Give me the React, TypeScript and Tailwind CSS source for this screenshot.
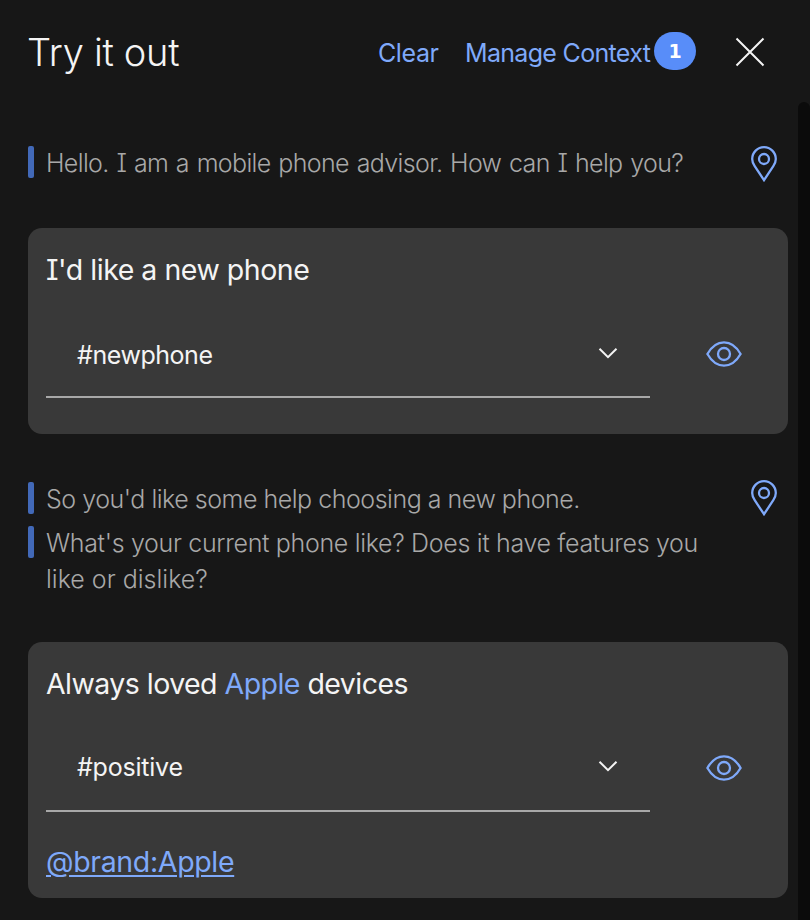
import type { ReactNode } from "react";

function CloseIcon() {
  return (
    <svg width="30" height="30" viewBox="0 0 30 30" fill="none" stroke="#f4f4f4" strokeWidth="2">
      <path d="M1.5 1.5 28.5 28.5M28.5 1.5 1.5 28.5" />
    </svg>
  );
}

function PinIcon() {
  return (
    <svg width="26" height="36" viewBox="0 0 26 36" fill="none" stroke="#7fa9fa" strokeWidth="2.3">
      <path d="M13 34.2 3.7 20.2C2 17.7 1.2 15.5 1.2 13a11.8 11.8 0 0 1 23.6 0c0 2.5-.8 4.7-2.5 7.2Z" />
      <circle cx="13" cy="13" r="5" />
    </svg>
  );
}

function EyeIcon() {
  return (
    <svg width="36" height="26" viewBox="0 0 36 26" fill="none" stroke="#7fa9fa" strokeWidth="2.3">
      <path d="M1.4 13C5.4 6 11.3 1.4 18 1.4S30.6 6 34.6 13C30.6 20 24.7 24.6 18 24.6S5.4 20 1.4 13Z" />
      <circle cx="18" cy="13" r="6" />
    </svg>
  );
}

function ChevronIcon() {
  return (
    <svg width="20" height="12" viewBox="0 0 20 12" fill="none" stroke="#f4f4f4" strokeWidth="2">
      <path d="m1.5 1.7 8.5 8.5 8.5-8.5" />
    </svg>
  );
}

function BotLine({ children }: { children: ReactNode }) {
  return (
    <div className="flex gap-3">
      <span className="h-8 w-1.5 shrink-0 rounded-[2px] bg-[#4269b8]" />
      <p className="-mt-px text-[25px] leading-9 font-light whitespace-nowrap text-[#a8a8a8]">{children}</p>
    </div>
  );
}

function IntentRow({ intent, chevronClass }: { intent: ReactNode; chevronClass: string }) {
  return (
    <div className="mt-[26px] flex items-start">
      <div className="flex h-[84px] w-[604px] items-start justify-between border-b-2 border-[#a8a8a8] pr-8 pl-[31px]">
        {intent}
        <span className={chevronClass}>
          <ChevronIcon />
        </span>
      </div>
      <button className="mt-[27px] ml-14">
        <EyeIcon />
      </button>
    </div>
  );
}

export default function App() {
  return (
    <div className="flex h-[920px] w-[810px] overflow-hidden bg-[#171717] font-['Inter','Liberation_Sans',sans-serif] font-normal text-[#f4f4f4] [font-feature-settings:'cv08'_1,'calt'_0]">
      <main className="flex w-[798px] flex-col pr-[10px] pl-7">
        <header className="flex h-[104px] items-start pt-[32px]">
          <h1 className="-ml-px w-[351px] text-[38px] leading-10 font-light tracking-[-0.3px] whitespace-nowrap">
            Try it out
          </h1>
          <nav className="flex items-start text-[25px] leading-[42px] whitespace-nowrap text-[#7fa9fa]">
            <a className="w-[87px] tracking-[-0.4px]">Clear</a>
            <a className="w-[189px] tracking-[-0.68px]">Manage Context</a>
          </nav>
          <span className="flex h-[38px] w-[42px] items-center justify-center rounded-[19px] bg-[#588df9] font-['DejaVu_Sans',sans-serif] text-[19px] font-bold text-white">
            1
          </span>
          <button className="mt-[5px] ml-[39px]">
            <CloseIcon />
          </button>
        </header>

        <section className="flex items-start justify-between pt-[42px] pr-[11px]">
          <BotLine>
            <span className="tracking-[-0.64px] [word-spacing:1.3px]">
              Hello. I am a mobile phone advisor. How can I help you?
            </span>
          </BotLine>
          <PinIcon />
        </section>

        <section className="mt-[46px] h-[206px] shrink-0 rounded-[14px] bg-[#393939] px-[18px] pt-6">
          <p className="text-[28.5px] leading-9 tracking-[-0.47px]">I'd like a new phone</p>
          <IntentRow
            chevronClass="mt-[33px]"
            intent={<span className="mt-[23px] text-[25px] leading-9 tracking-[-0.45px]">#newphone</span>}
          />
        </section>

        <section className="mt-[46px] flex h-[118px] shrink-0 items-start justify-between pr-[11px]">
          <div className="flex flex-col gap-2 pt-0.5">
            <div className="h-9">
              <BotLine>
                <span className="tracking-[-0.48px]">So you'd like some help choosing a new phone.</span>
              </BotLine>
            </div>
            <BotLine>
              <span className="tracking-[-0.33px]">What's your current phone like? Does it have features you</span>
              <br />
              <span className="tracking-[0px]">like or dislike?</span>
            </BotLine>
          </div>
          <PinIcon />
        </section>

        <section className="mt-[44px] h-[256px] shrink-0 rounded-[14px] bg-[#393939] px-[18px] pt-6">
          <p className="text-[28.5px] leading-9 tracking-[-0.54px]">
            Always loved <span className="text-[#7fa9fa]">Apple</span> devices
          </p>
          <IntentRow
            chevronClass="mt-8"
            intent={<span className="mt-[21px] text-[25px] leading-9 tracking-[-0.22px]">#positive</span>}
          />
          <a className="mt-8 block text-[28.5px] leading-9 tracking-[-0.34px] text-[#7fa9fa] underline decoration-2 underline-offset-[3px]">
            @brand:Apple
          </a>
        </section>
      </main>
      <div className="mt-[102px] w-3 rounded-t-[6px] bg-[#0b0b0b]" />
    </div>
  );
}
